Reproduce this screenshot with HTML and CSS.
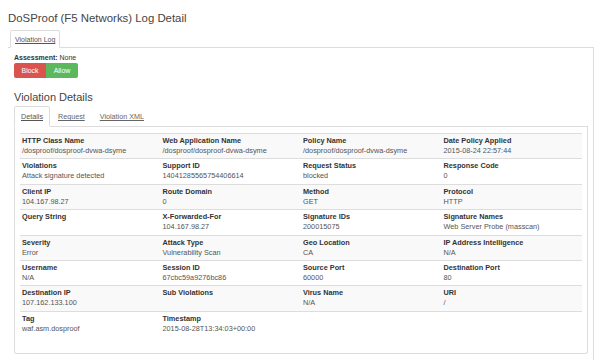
FILE: index.html
```html
<!DOCTYPE html>
<html lang="en">
<head>
  <meta charset="UTF-8" />
  <title>DoSProof (F5 Networks) Log Detail</title>
  <link rel="stylesheet" href="styles.css">
</head>
<body>
  <div class="page">
    <h1 class="page-title">DoSProof (F5 Networks) Log Detail</h1>

    <!-- top level tabs -->
    <ul class="tabs">
      <li class="active"><a href="#">Violation Log</a></li>
    </ul>
    <div class="outer-pane">
      <div class="assessment"><b>Assessment:</b> None</div>
      <div class="btn-group">
        <button class="btn btn-block">Block</button><button class="btn btn-allow">Allow</button>
      </div>

      <h2 class="section-title">Violation Details</h2>
      <ul class="tabs inner-tabs">
        <li class="active"><a href="#">Details</a></li>
        <li><a href="#">Request</a></li>
        <li><a href="#">Violation XML</a></li>
      </ul>
      <div class="inner-pane">
        <table class="details">
          <tr>
            <td><b>HTTP Class Name</b><span>/dosproof/dosproof-dvwa-dsyme</span></td>
            <td><b>Web Application Name</b><span>/dosproof/dosproof-dvwa-dsyme</span></td>
            <td><b>Policy Name</b><span>/dosproof/dosproof-dvwa-dsyme</span></td>
            <td><b>Date Policy Applied</b><span>2015-08-24 22:57:44</span></td>
          </tr>
          <tr>
            <td><b>Violations</b><span>Attack signature detected</span></td>
            <td><b>Support ID</b><span>14041285565754406614</span></td>
            <td><b>Request Status</b><span>blocked</span></td>
            <td><b>Response Code</b><span>0</span></td>
          </tr>
          <tr>
            <td><b>Client IP</b><span>104.167.98.27</span></td>
            <td><b>Route Domain</b><span>0</span></td>
            <td><b>Method</b><span>GET</span></td>
            <td><b>Protocol</b><span>HTTP</span></td>
          </tr>
          <tr>
            <td><b>Query String</b><span></span></td>
            <td><b>X-Forwarded-For</b><span>104.167.98.27</span></td>
            <td><b>Signature IDs</b><span>200015075</span></td>
            <td><b>Signature Names</b><span>Web Server Probe (masscan)</span></td>
          </tr>
          <tr>
            <td><b>Severity</b><span>Error</span></td>
            <td><b>Attack Type</b><span>Vulnerability Scan</span></td>
            <td><b>Geo Location</b><span>CA</span></td>
            <td><b>IP Address Intelligence</b><span>N/A</span></td>
          </tr>
          <tr>
            <td><b>Username</b><span>N/A</span></td>
            <td><b>Session ID</b><span>67cbc59a9276bc86</span></td>
            <td><b>Source Port</b><span>60000</span></td>
            <td><b>Destination Port</b><span>80</span></td>
          </tr>
          <tr>
            <td><b>Destination IP</b><span>107.162.133.100</span></td>
            <td><b>Sub Violations</b><span></span></td>
            <td><b>Virus Name</b><span>N/A</span></td>
            <td><b>URI</b><span>/</span></td>
          </tr>
          <tr>
            <td><b>Tag</b><span>waf.asm.dosproof</span></td>
            <td><b>Timestamp</b><span>2015-08-28T13:34:03+00:00</span></td>
            <td></td>
            <td></td>
          </tr>
        </table>
      </div>
    </div>
  </div>
</body>
</html>
```

FILE: styles.css
```css
body, html {
  margin: 0;
  padding: 0;
  font-family: 'Liberation Sans', Arial, sans-serif;
  background: #fff;
  color: #333;
}

.page {
  width: 586px;
  margin-left: 8px;
}

.page-title {
  margin: 0;
  padding-top: 10px;
  height: 20px;
  font-size: 11.4px;
  line-height: 16px;
  font-weight: normal;
  color: #444;
}

.tabs {
  list-style: none;
  margin: 0;
  padding: 0 0 0 2px;
  display: flex;
  border-bottom: 1px solid #ddd;
}

.tabs li {
  margin-bottom: -1px;
  border: 1px solid transparent;
  border-radius: 2px 2px 0 0;
}

.tabs li.active {
  border-color: #ddd #ddd #fff;
  background: #fff;
}

.tabs a {
  display: block;
  padding: 4px 4px 3px;
  font-size: 7px;
  line-height: 9px;
  color: #555;
}

.outer-pane {
  border-right: 1px solid #ddd;
  padding: 5px 5px 0 6px;
  height: 320px;
}

.assessment {
  font-size: 7px;
  line-height: 9px;
  color: #333;
}

.btn-group {
  display: flex;
  margin-top: 1px;
}

.btn {
  border: none;
  margin: 0;
  padding: 3px 7.5px;
  font-family: inherit;
  font-size: 7px;
  line-height: 9px;
  color: #fff;
}

.btn-block {
  background: #d9534f;
  border-radius: 2px 0 0 2px;
}

.btn-allow {
  background: #5cb85c;
  border-radius: 0 2px 2px 0;
}

.section-title {
  margin: 13px 0 2px;
  font-size: 11px;
  line-height: 13px;
  font-weight: normal;
  color: #444;
}

.inner-tabs {
  padding-left: 0;
}

.inner-tabs li {
  margin-right: 1px;
}

.inner-tabs a {
  padding: 5px 6px;
  font-size: 7.2px;
  color: #666;
}

.inner-tabs li.active a {
  color: #555;
}

.inner-pane {
  border: 1px solid #ddd;
  border-top: none;
  border-radius: 0 0 3px 3px;
  padding: 6px 5px 17px;
}

.details {
  width: 100%;
  table-layout: fixed;
  border-collapse: collapse;
}

.details td {
  border-top: 1px solid #ddd;
  padding: 2px 2px 2.4px;
  vertical-align: top;
  font-size: 7.3px;
  line-height: 10px;
}

.details tr:nth-child(odd) td {
  background: #f9f9f9;
}

.details b {
  display: block;
  color: #333;
}

.details span {
  display: block;
  color: #555;
}
```
